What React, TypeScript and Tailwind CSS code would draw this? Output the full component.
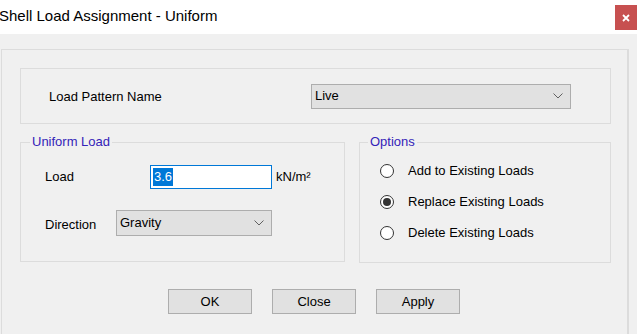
import React, { useState } from 'react';

const Chevron: React.FC = () => (
  <svg width="10" height="6" viewBox="0 0 10 6" className="shrink-0">
    <path d="M0.5 0.5 L5 5 L9.5 0.5" fill="none" stroke="#606060" strokeWidth="1" />
  </svg>
);

const Combo: React.FC<{ value: string; className: string }> = ({ value, className }) => (
  <div className={`flex items-center justify-between bg-[#e1e1e1] border border-[#adadad] pl-[3px] pr-[7px] ${className}`}>
    <span>{value}</span>
    <Chevron />
  </div>
);

const Radio: React.FC<{ label: string; checked: boolean; onClick: () => void }> = ({ label, checked, onClick }) => (
  <div className="flex items-center h-[31px] cursor-default" onClick={onClick}>
    <span className="w-[14px] h-[14px] rounded-full border border-[#333] bg-white flex items-center justify-center">
      {checked && <span className="w-[8px] h-[8px] rounded-full bg-[#333]"></span>}
    </span>
    <span className="ml-[14px]">{label}</span>
  </div>
);

const App: React.FC = () => {
  const [option, setOption] = useState(1);

  return (
    <div
      className="w-[637px] h-[334px] overflow-hidden bg-[#f0f0f0] text-black text-[13px] leading-[16px]"
      style={{ fontFamily: '"Liberation Sans", Arial, sans-serif' }}
    >
      {/* Title bar */}
      <div className="h-[34px] bg-white flex items-start justify-between">
        <span className="text-[15px] leading-[20px] mt-[6px] -ml-[1px]">Shell Load Assignment - Uniform</span>
        <div className="w-[22px] h-[25px] mt-[5px] bg-[#c75050] flex items-center justify-center">
          <svg width="8" height="8" viewBox="0 0 8 8">
            <path d="M1 1 L7 7 M7 1 L1 7" stroke="white" strokeWidth="1.8" />
          </svg>
        </div>
      </div>

      {/* Body */}
      <div className="ml-[1px] mt-[15px] w-[628px] h-[285px] border-l border-t border-r-2 border-[#dcdcdc]">
        {/* Load pattern */}
        <div className="ml-[18px] mt-[18px] w-[591px] h-[56px] border border-[#dcdcdc] flex items-center">
          <span className="ml-[28px] mt-[1px] w-[262px]">Load Pattern Name</span>
          <Combo value="Live" className="w-[260px] h-[25px]" />
        </div>

        <div className="ml-[18px] mt-[18px] flex gap-[14px]">
          {/* Uniform load */}
          <div className="relative w-[325px] h-[120px] border border-[#dcdcdc] pl-[24px] pt-[22px]">
            <span className="absolute -top-[9px] left-[9px] px-[2px] bg-[#f0f0f0] text-[#3423b8]">Uniform Load</span>
            <div className="flex items-center h-[24px]">
              <span className="w-[105px]">Load</span>
              <div className="w-[122px] h-[24px] bg-white border border-[#0078d7] flex items-center pl-[2px]">
                <span className="bg-[#0078d7] text-white px-[1px] leading-[18px]">3.6</span>
              </div>
              <span className="ml-[4px]">kN/m²</span>
            </div>
            <div className="flex items-center h-[26px] mt-[21px]">
              <span className="w-[71px] mt-[3px]">Direction</span>
              <Combo value="Gravity" className="w-[156px] h-[26px]" />
            </div>
          </div>

          {/* Options */}
          <div className="relative w-[252px] h-[121px] border border-[#dcdcdc] pl-[20px] pt-[12px]">
            <span className="absolute -top-[9px] left-[8px] px-[2px] bg-[#f0f0f0] text-[#3423b8]">Options</span>
            <Radio label="Add to Existing Loads" checked={option === 0} onClick={() => setOption(0)} />
            <Radio label="Replace Existing Loads" checked={option === 1} onClick={() => setOption(1)} />
            <Radio label="Delete Existing Loads" checked={option === 2} onClick={() => setOption(2)} />
          </div>
        </div>

        {/* Buttons */}
        <div className="flex gap-[20px] ml-[166px] mt-[26px]">
          {['OK', 'Close', 'Apply'].map(b => (
            <button key={b} className="w-[84px] h-[25px] bg-[#e1e1e1] border border-[#adadad] flex items-center justify-center">
              {b}
            </button>
          ))}
        </div>
      </div>
    </div>
  );
};

export default App;
